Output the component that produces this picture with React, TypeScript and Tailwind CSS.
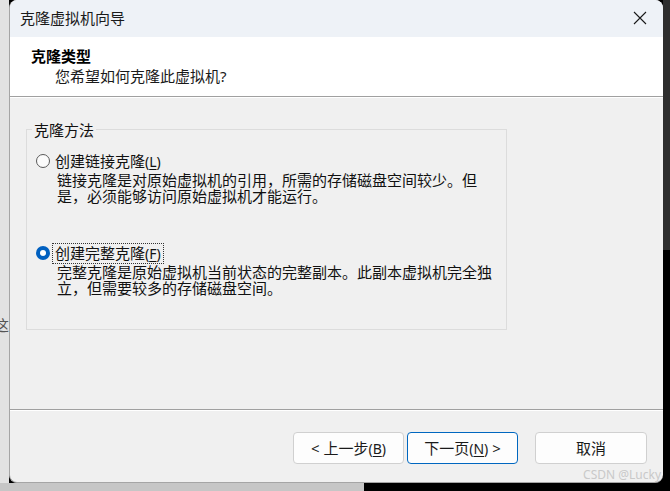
import React from 'react';

const cjk = { fontFamily: '"Noto Sans", "Noto Sans CJK SC", sans-serif' };

function Radio({ checked }: { checked?: boolean }) {
  if (checked) {
    return (
      <span className="flex h-[14px] w-[14px] shrink-0 items-center justify-center rounded-full bg-[#0060c0]">
        <span className="h-[6px] w-[6px] rounded-full bg-white" />
      </span>
    );
  }
  return <span className="h-[14px] w-[14px] shrink-0 rounded-full border border-[#5a5a5a] bg-[#fbfbfb]" />;
}

function Accel({ k }: { k: string }) {
  return (
    <span className="text-[14px]">
      (<span className="underline underline-offset-2">{k}</span>)
    </span>
  );
}

function Option({
  checked,
  label,
  k,
  desc,
}: {
  checked?: boolean;
  label: string;
  k: string;
  desc: string[];
}) {
  return (
    <div className="flex flex-col">
      <div className="flex items-center gap-[3px]">
        <Radio checked={checked} />
        <span
          className={
            'px-[2px] leading-[18px] ' +
            (checked ? 'outline outline-1 outline-dotted outline-[#333]' : '')
          }
        >
          {label}
          <Accel k={k} />
        </span>
      </div>
      <div className="mt-[1px] pl-[21px] leading-[16px]">
        {desc.map((d) => (
          <div key={d}>{d}</div>
        ))}
      </div>
    </div>
  );
}

function Button({ children, primary }: { children: React.ReactNode; primary?: boolean }) {
  return (
    <button
      className={
        'flex h-[32px] w-full items-center justify-center rounded-[4px] border bg-[#fdfdfd] text-[15px] text-[#1a1a1a] ' +
        (primary ? 'border-[#0067c0]' : 'border-[#d0d0d0]')
      }
    >
      {children}
    </button>
  );
}

export default function App() {
  return (
    <div className="flex h-[491px] w-[670px] flex-col overflow-hidden bg-black" style={cjk}>
      <div className="flex h-[483px]">
        {/* left backdrop */}
        <div className="flex w-[9px] flex-col bg-[#e2e2e2]">
          <div className="h-[318px]" />
          <div className="flex justify-end overflow-hidden text-[15px] leading-[15px] text-[#555]">
            <span className="shrink-0">这</span>
          </div>
        </div>

        {/* dialog */}
        <div className="flex w-[654px] flex-col overflow-hidden rounded-[8px] border-b border-l border-[#a5a5a5] bg-[#f0f0f0] text-[15px] text-[#111]">
          <div className="flex h-[37px] items-center justify-between bg-[#eef2f7] pl-[10px] pr-[16px]">
            <span className="text-[15px] text-[#1a1a1a]">克隆虚拟机向导</span>
            <svg width="14" height="14" viewBox="0 0 14 14">
              <path d="M1 1 L13 13 M13 1 L1 13" stroke="#1a1a1a" strokeWidth="1.1" />
            </svg>
          </div>

          <div className="flex h-[59px] flex-col bg-white pl-[21px] pt-[10px]">
            <span className="text-[15px] font-bold leading-[18px] text-black">克隆类型</span>
            <span className="mt-[2px] pl-[24px] text-[15px] leading-[18px] text-[#1a1a1a]">您希望如何克隆此虚拟机?</span>
          </div>
          <div className="h-[1px] bg-[#a0a0a0]" />
          <div className="h-[1px] bg-white" />

          <div className="flex h-[313px] flex-col pl-[16px] pt-[24px]">
            <fieldset className="h-[208px] w-[481px] border border-[#dcdcdc] px-[9px] pt-[14px]">
              <legend className="ml-[-4px] px-[2px] leading-[16px]">克隆方法</legend>
              <div className="flex flex-col gap-[40px]">
                <Option
                  label="创建链接克隆"
                  k="L"
                  desc={['链接克隆是对原始虚拟机的引用，所需的存储磁盘空间较少。但', '是，必须能够访问原始虚拟机才能运行。']}
                />
                <Option
                  checked
                  label="创建完整克隆"
                  k="F"
                  desc={['完整克隆是原始虚拟机当前状态的完整副本。此副本虚拟机完全独', '立，但需要较多的存储磁盘空间。']}
                />
              </div>
            </fieldset>
          </div>

          <div className="h-[1px] bg-[#a0a0a0]" />
          <div className="h-[1px] bg-white" />

          <div className="flex flex-1 flex-col">
            <div className="flex justify-end pr-[16px] pt-[21px]">
              <div className="flex gap-[3px]">
                <div className="w-[111px]">
                  <Button>
                    &lt; 上一步<Accel k="B" />
                  </Button>
                </div>
                <div className="w-[111px]">
                  <Button primary>
                    下一页<Accel k="N" />&nbsp;&gt;
                  </Button>
                </div>
              </div>
              <div className="ml-[17px] w-[112px]">
                <Button>取消</Button>
              </div>
            </div>
            <div className="flex justify-end pr-[2px] pt-[4px] text-[12px] leading-[14px] text-[#c9c9c9]">
              CSDN @Lucky
            </div>
          </div>
        </div>

        {/* right backdrop */}
        <div className="flex flex-1 flex-col">
          <div className="h-[250px] bg-[#2e2e2e]" />
          <div className="flex-1 bg-black" />
        </div>
      </div>
      <div className="flex h-[8px]">
        <div className="w-[364px] bg-[#c6c6c6]" />
        <div className="flex-1 bg-black" />
      </div>
    </div>
  );
}
